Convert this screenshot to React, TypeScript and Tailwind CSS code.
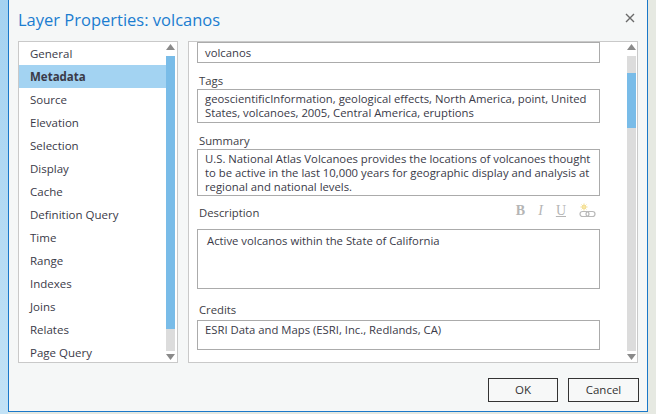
const pages = [
  "General",
  "Metadata",
  "Source",
  "Elevation",
  "Selection",
  "Display",
  "Cache",
  "Definition Query",
  "Time",
  "Range",
  "Indexes",
  "Joins",
  "Relates",
  "Page Query",
]

function Arrow({ up }: { up?: boolean }) {
  return (
    <svg width="9" height="6" viewBox="0 0 9 6" className="block">
      {up ? <polygon points="0,6 9,6 4.5,0" fill="#8a8a8a" /> : <polygon points="0,0 9,0 4.5,6" fill="#8a8a8a" />}
    </svg>
  )
}

function LinkIcon() {
  return (
    <svg width="18" height="18" viewBox="0 0 18 18" className="block">
      <g stroke="#f3dc8a" strokeWidth="1" fill="none">
        <circle cx="5" cy="4" r="2" fill="#f8e7a8" />
        <path d="M5 0.5v1M5 6.5v1M1.5 4h1M7.5 4h1M2.6 1.6l.7.7M6.7 5.7l.7.7M2.6 6.4l.7-.7M6.7 2.3l.7-.7" />
      </g>
      <g stroke="#b8b8b8" strokeWidth="1.2" fill="none">
        <rect x="1" y="8.5" width="9" height="5" rx="2.5" />
        <rect x="7" y="8.5" width="9" height="5" rx="2.5" />
      </g>
    </svg>
  )
}

function Label({ children, className = "" }: { children: React.ReactNode; className?: string }) {
  return <div className={`pl-[2px] text-[11.3px] leading-[16px] text-[#3d3d45] ${className}`}>{children}</div>
}

const box = "w-[403px] border border-[#ababab] whitespace-nowrap text-[11.3px] text-[#3a3a48]"

export default function App() {
  return (
    <div
      className="flex h-[414px] w-[656px] overflow-hidden bg-[#e4e8e1]"
      style={{ fontFamily: '"Open Sans", "Noto Sans", sans-serif' }}
    >
      <div className="h-full w-[8px] bg-gradient-to-b from-[#a4d2f1] to-[#c2e2f6]" />

      <div className="flex h-[412px] w-[640px] flex-col border-x border-b border-[#1a78c9] bg-[#f5f7f7]">
        {/* Title */}
        <div className="flex h-[41px] items-center justify-between pl-[9px] pr-[12px]">
          <span className="text-[16.5px] text-[#1b7dd0]">Layer Properties: volcanos</span>
          <svg width="10" height="10" viewBox="0 0 10 10" className="mt-[-6px]">
            <path d="M1 1l8 8M9 1l-8 8" stroke="#6a6a6a" strokeWidth="1.4" />
          </svg>
        </div>

        <div className="flex h-[322px] gap-[10px] px-[9px]">
          {/* Page list */}
          <div className="flex h-full w-[160px] border border-[#c9c9c9] bg-white">
            <div className="flex-1 overflow-hidden">
              {pages.map((p) => (
                <div
                  key={p}
                  className={`h-[23px] pl-[11px] text-[11.5px] leading-[23px] text-[#3a3a48] ${
                    p === "Metadata" ? "bg-[#a3d3f2] font-bold" : ""
                  }`}
                >
                  {p}
                </div>
              ))}
            </div>
            <div className="mr-[2px] flex w-[9px] flex-col items-center">
              <div className="pt-[2px] pb-[6px]">
                <Arrow up />
              </div>
              <div className="h-[273px] w-full bg-[#79bce8]" />
              <div className="w-full flex-1 bg-[#dcdcdc]" />
              <div className="pt-[3px] pb-[2px]">
                <Arrow />
              </div>
            </div>
          </div>

          {/* Metadata panel */}
          <div className="flex h-full w-[450px] border border-[#c9c9c9] bg-white">
            <div className="flex-1 overflow-hidden pl-[8px]">
              <div className={`${box} h-[21px] pl-[7px] leading-[19px]`}>volcanos</div>

              <Label className="mt-[10px]">Tags</Label>
              <div className={`${box} h-[34px] pl-[7px] pt-[2px] leading-[14px]`}>
                geoscientificInformation, geological effects, North America, point, United
                <br />
                States, volcanoes, 2005, Central America, eruptions
              </div>

              <Label className="mt-[10px]">Summary</Label>
              <div className={`${box} h-[47px] pl-[7px] pt-[2px] leading-[14px]`}>
                U.S. National Atlas Volcanoes provides the locations of volcanoes thought
                <br />
                to be active in the last 10,000 years for geographic display and analysis at
                <br />
                regional and national levels.
              </div>

              <div className="mt-[9px] flex h-[24px] w-[403px] items-start justify-between">
                <Label>Description</Label>
                <div className="mr-[3px] mt-[-4px] flex items-end gap-[13px] text-[#b5b5b5]">
                  <span className="text-[14px] font-bold leading-[20px]" style={{ fontFamily: '"Liberation Serif", serif' }}>
                    B
                  </span>
                  <span className="text-[14px] italic leading-[20px]" style={{ fontFamily: '"Liberation Serif", serif' }}>
                    I
                  </span>
                  <span className="text-[14px] leading-[20px] underline" style={{ fontFamily: '"Liberation Serif", serif' }}>
                    U
                  </span>
                  <LinkIcon />
                </div>
              </div>
              <div className={`${box} h-[60px] pl-[9px] pt-[4px] leading-[14px]`}>
                Active volcanos within the State of California
              </div>

              <Label className="mt-[13px] h-[18px]">Credits</Label>
              <div className={`${box} h-[30px] pl-[7px] pt-[2px] leading-[14px]`}>
                ESRI Data and Maps (ESRI, Inc., Redlands, CA)
              </div>
            </div>
            <div className="mr-[1px] flex w-[9px] flex-col items-center">
              <div className="pt-[2px] pb-[6px]">
                <Arrow up />
              </div>
              <div className="h-[17px] w-full bg-[#dcdcdc]" />
              <div className="h-[55px] w-full bg-[#79bce8]" />
              <div className="w-full flex-1 bg-[#dcdcdc]" />
              <div className="pt-[3px] pb-[2px]">
                <Arrow />
              </div>
            </div>
          </div>
        </div>

        {/* Buttons */}
        <div className="mt-[15px] flex justify-end gap-[10px] pr-[8px]">
          <button className="h-[24px] w-[70px] border border-[#333] bg-[#f7f8f8] text-[11.5px] text-[#333]">OK</button>
          <button className="h-[24px] w-[71px] border border-[#333] bg-[#f7f8f8] text-[11.5px] text-[#333]">Cancel</button>
        </div>
      </div>

      <div className="h-full w-[8px] bg-[#e6e9e2]" />
    </div>
  )
}
